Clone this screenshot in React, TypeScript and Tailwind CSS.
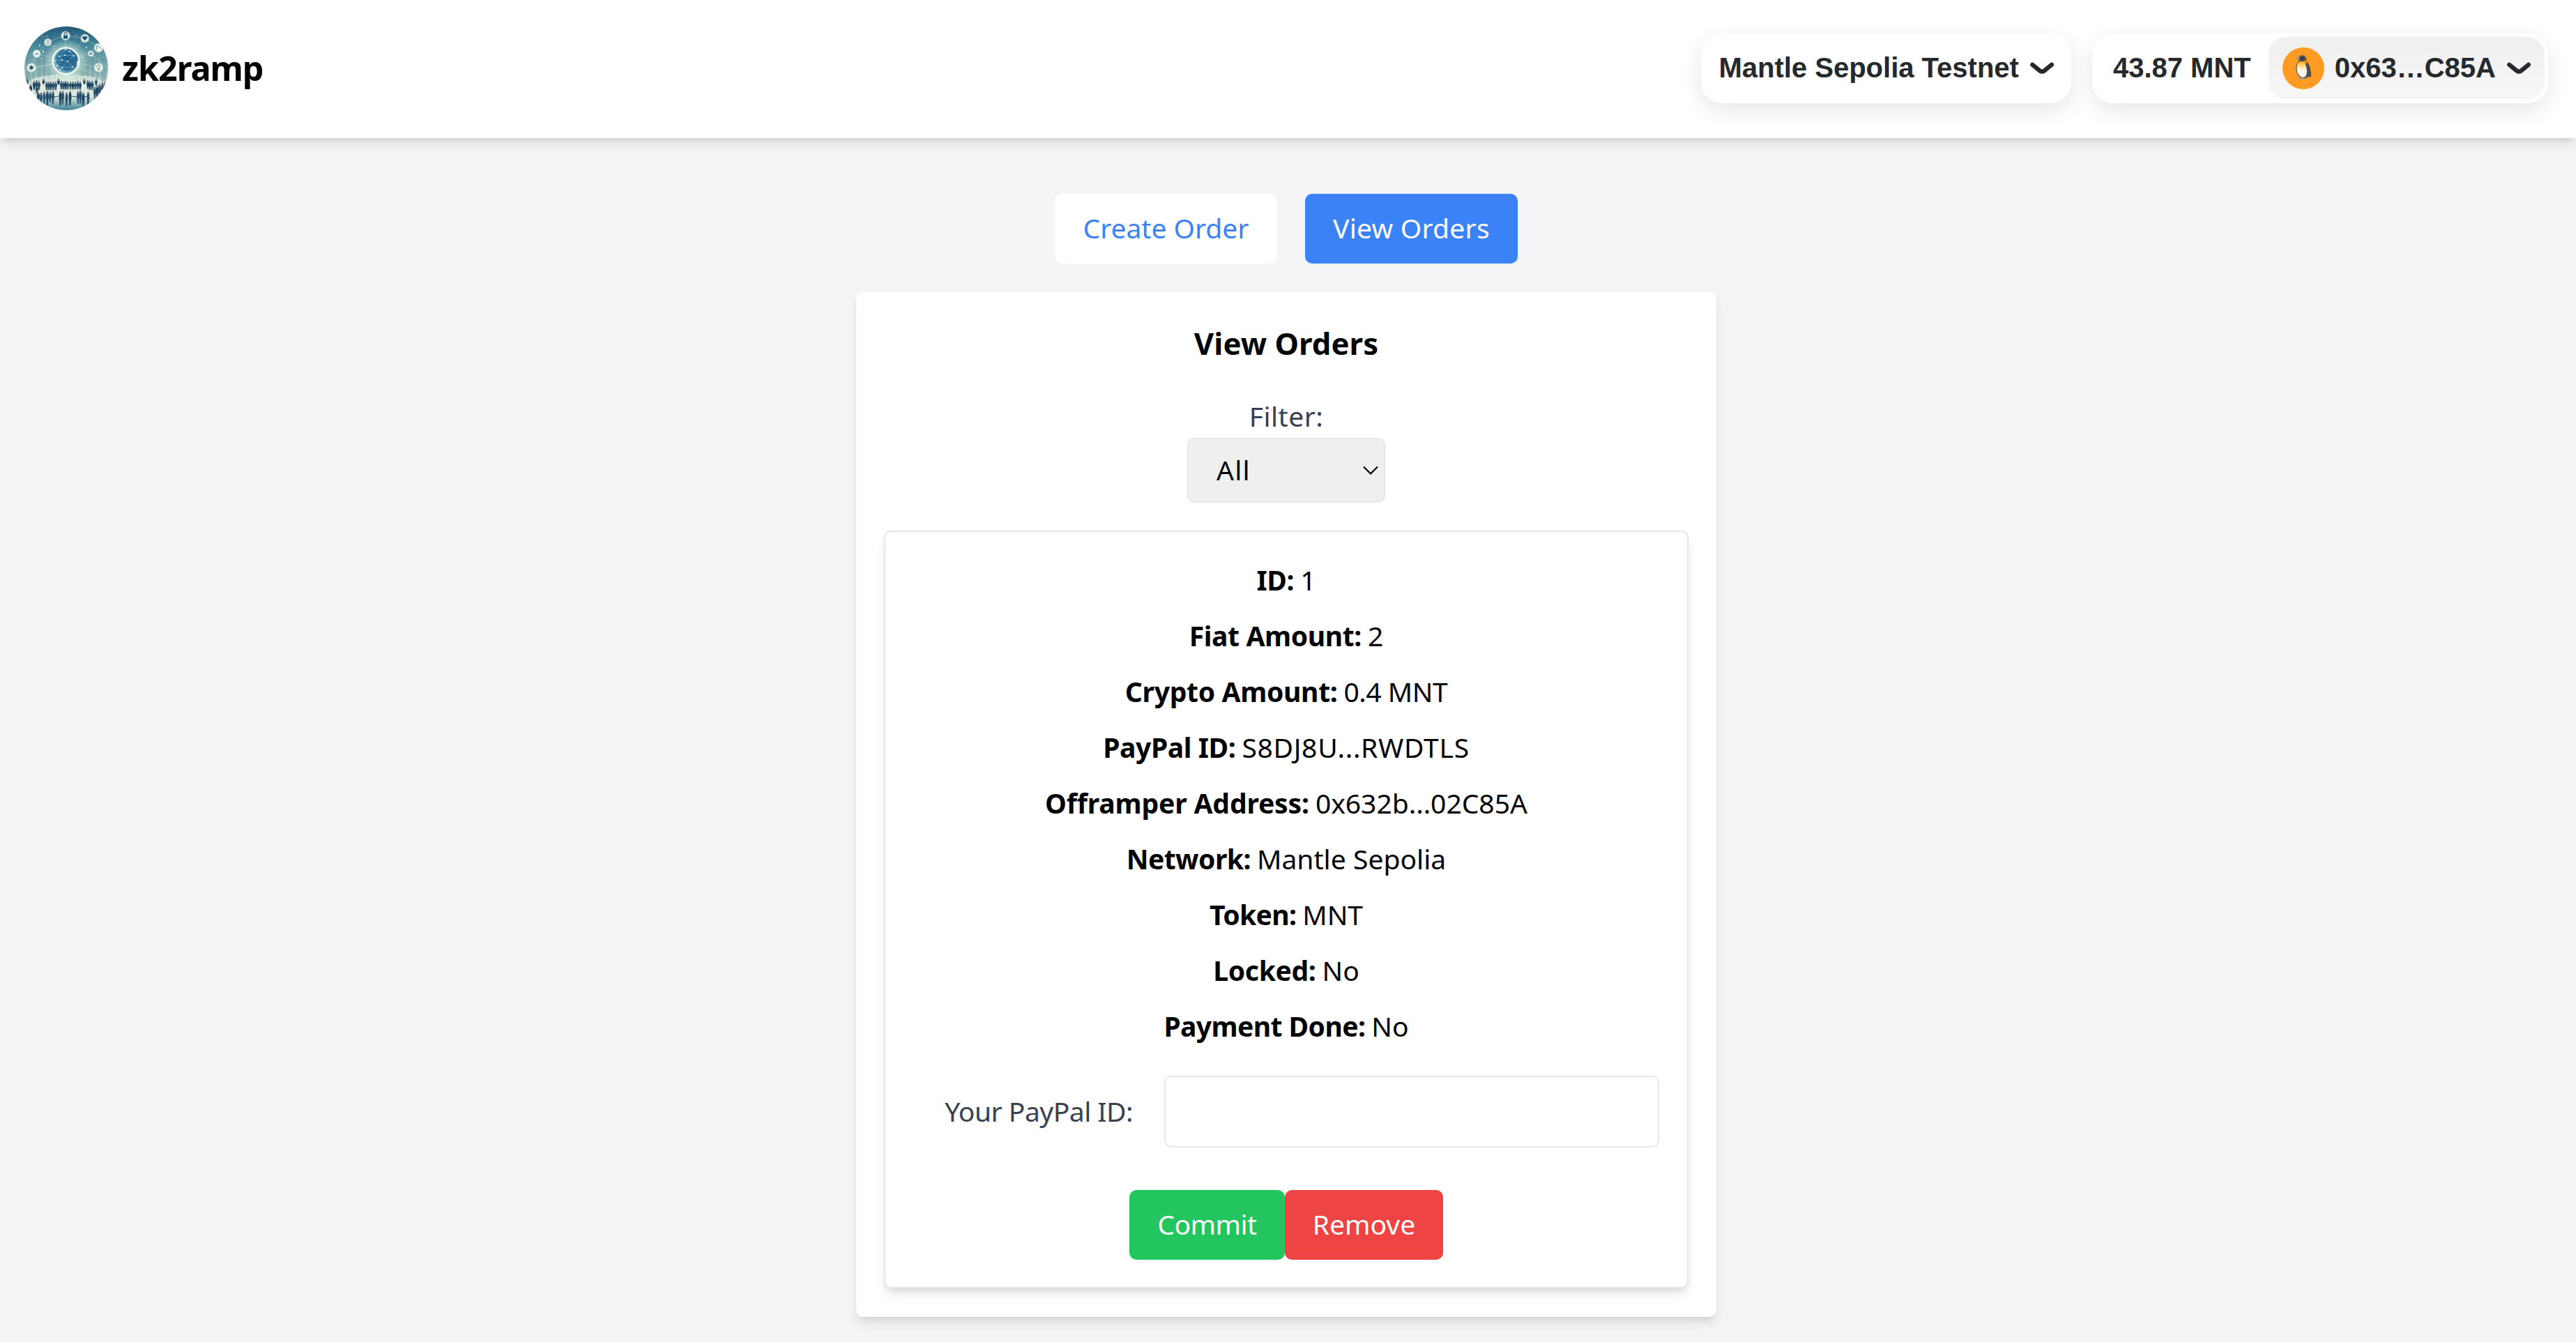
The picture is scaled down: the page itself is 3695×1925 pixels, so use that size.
import React from "react";

type Field = { label: string; labelClass: string; value: string; valueClass: string };

const fields: Field[] = [
  { label: "ID:", labelClass: "tracking-[-0.3px]", value: "1", valueClass: "" },
  { label: "Fiat Amount:", labelClass: "tracking-[-0.36px]", value: "2", valueClass: "" },
  { label: "Crypto Amount:", labelClass: "tracking-[-0.3px]", value: "0.4 MNT", valueClass: "tracking-[-0.45px]" },
  { label: "PayPal ID:", labelClass: "tracking-[-0.37px]", value: "S8DJ8U...RWDTLS", valueClass: "tracking-[0.72px]" },
  { label: "Offramper Address:", labelClass: "tracking-[-0.12px]", value: "0x632b...02C85A", valueClass: "" },
  { label: "Network:", labelClass: "tracking-[-0.5px]", value: "Mantle Sepolia", valueClass: "tracking-[0.05px]" },
  { label: "Token:", labelClass: "tracking-[-0.6px]", value: "MNT", valueClass: "" },
  { label: "Locked:", labelClass: "tracking-[-0.3px]", value: "No", valueClass: "" },
  { label: "Payment Done:", labelClass: "tracking-[-0.55px]", value: "No", valueClass: "" },
];

// Icon bubbles around the globe: x, y, radius
const bubbles: [number, number, number][] = [
  [59, 13.3, 5.4],
  [86.7, 17, 5],
  [106.5, 30.5, 5.4],
  [95.3, 39, 3.6],
  [106.5, 58.8, 5.4],
  [33.7, 22.7, 4.4],
  [17.7, 39, 4.6],
  [10, 59, 5.4],
];

// Crowd figures: x, head y, height
const people: [number, number, number][] = [
  [4, 76, 6], [14, 79, 12], [17.5, 78, 13], [21, 79, 12], [27.5, 76, 6],
  [32, 80, 11], [35, 80, 11], [38, 80, 11], [41.5, 80, 11], [45, 80, 11], [49, 76, 7],
  [53, 79, 11], [56, 80, 10], [59, 79, 11], [62, 80, 10], [66, 80, 10], [69.5, 80, 10], [73, 80, 10], [76.5, 79, 11], [80, 80, 10],
  [86, 76, 6], [91, 78, 11], [94, 79, 12], [97.5, 79, 12], [103, 76, 8],
  [9, 84, 12], [18, 86, 10], [116, 80, 8],
  [20, 95, 13], [24, 96, 16], [28.5, 95, 17], [33, 94, 20], [37, 95, 14], [41, 94, 18],
  [51.5, 94, 20], [55, 94, 18], [60.5, 96, 19], [65.5, 94, 20],
  [77, 94, 17], [80.5, 93, 19], [84.5, 96, 19], [91.5, 95, 18],
  [101, 88, 16], [104.5, 86, 18], [108, 84, 17], [112, 82, 15],
];

const towers: [number, number, number][] = [
  [2, 44, 7], [11, 50, 4], [18, 46, 6], [26, 38, 5], [33, 50, 6], [41, 58, 5],
  [73, 60, 5], [80, 46, 6], [88, 50, 5], [95, 44, 6], [103, 40, 4], [110, 46, 7],
];

const nodes: [number, number][] = [
  [50, 43], [58, 41], [54, 48], [62, 50], [71, 42], [43, 49], [47, 56], [54, 59], [69, 58], [65, 36], [59, 33], [51, 62],
];

function Logo() {
  return (
    <svg viewBox="0 0 120 120" className="size-[120px] rounded-full" aria-label="zk2ramp logo">
      <defs>
        <linearGradient id="sky" x1="0" y1="0" x2="0" y2="1">
          <stop offset="0" stopColor="#245a7c" />
          <stop offset="0.2" stopColor="#438297" />
          <stop offset="0.42" stopColor="#79a9ae" />
          <stop offset="0.62" stopColor="#a3c3c1" />
          <stop offset="0.72" stopColor="#e2ece0" />
          <stop offset="0.84" stopColor="#d8e6dd" />
          <stop offset="1" stopColor="#3f8093" />
        </linearGradient>
        <radialGradient id="halo">
          <stop offset="0.5" stopColor="#f2fae6" stopOpacity="0.95" />
          <stop offset="0.65" stopColor="#d3ebdc" stopOpacity="0.5" />
          <stop offset="1" stopColor="#d3ebdc" stopOpacity="0" />
        </radialGradient>
        <radialGradient id="globe" cx="0.55" cy="0.45">
          <stop offset="0" stopColor="#20608c" />
          <stop offset="0.75" stopColor="#2d7199" />
          <stop offset="1" stopColor="#7fb9c4" />
        </radialGradient>
        <radialGradient id="bubble">
          <stop offset="0.6" stopColor="#f7fbee" />
          <stop offset="0.8" stopColor="#e5f2e6" stopOpacity="0.75" />
          <stop offset="1" stopColor="#e5f2e6" stopOpacity="0" />
        </radialGradient>
      </defs>
      <rect width="120" height="120" fill="url(#sky)" />
      {towers.map(([x, y, w]) => (
        <rect key={x} x={x} y={y} width={w} height={78 - y} fill="#5d8c98" opacity="0.35" />
      ))}
      <ellipse cx="60" cy="78" rx="50" ry="9" fill="#f3f8e9" opacity="0.6" />
      <g stroke="#d7eee6" strokeWidth="0.6" opacity="0.65" fill="none">
        {bubbles.map(([x, y]) => (
          <path key={`${x}-${y}`} d={`M59.5 49.5L${x} ${y}`} />
        ))}
        <path d="M10 59L17.7 39L33.7 22.7Q46 16 59 13.3L86.7 17L106.5 30.5M95 39L120 60M59 49L0 64M59 49L118 78M18 4L34 23M106 30L120 20" />
      </g>
      <circle cx="59.5" cy="49.5" r="32" fill="url(#halo)" />
      <circle cx="59.5" cy="49.5" r="18.8" fill="url(#globe)" stroke="#f6fcec" strokeWidth="2.2" />
      <path d="M50 43L58 41L71 42L62 50L54 48L47 56L54 59L69 58L62 50M43 49L54 48L50 43L59 33L65 36L71 42M43 49L47 56M54 59L62 50" fill="none" stroke="#a9d5dc" strokeWidth="0.5" />
      {nodes.map(([x, y]) => (
        <circle key={`${x}-${y}`} cx={x} cy={y} r="1.1" fill="#effaf3" />
      ))}
      <ellipse cx="77" cy="53" rx="2" ry="4" fill="#f7fce9" opacity="0.8" />
      <g fill="#e6f4ec">
        <circle cx="27" cy="36" r="1.2" /><circle cx="25" cy="46" r="0.9" /><circle cx="33" cy="14" r="0.8" />
        <circle cx="83" cy="45" r="1.1" /><circle cx="46" cy="69" r="1.1" /><circle cx="75" cy="68" r="1.1" />
        <circle cx="43" cy="28" r="0.8" /><circle cx="74" cy="13" r="0.8" /><circle cx="22" cy="27" r="1" />
        <circle cx="89" cy="30" r="1" /><circle cx="41" cy="70" r="1" />
      </g>
      {bubbles.map(([x, y, r]) => (
        <circle key={`${x}-${y}`} cx={x} cy={y} r={r * 1.35} fill="url(#bubble)" />
      ))}
      <g fill="#1f567d">
        <rect x="56" y="12.6" width="6.2" height="5" rx="0.6" />
        <path d="M57.2 12.6V11a1.9 2.2 0 0 1 3.8 0V12.6" fill="none" stroke="#1f567d" strokeWidth="1.1" />
        <path d="M86.7 20.4L83.5 17a1.9 1.9 0 0 1 3.2-2.4a1.9 1.9 0 0 1 3.2 2.4Z" />
        <path d="M10 55.4V62.6M6.9 57.2L13.1 60.8M6.9 60.8L13.1 57.2" stroke="#1f567d" strokeWidth="1.5" />
        <circle cx="10" cy="59" r="1.9" />
      </g>
      <g fill="none" stroke="#39728c" strokeWidth="0.9">
        <path d="M106.5 55.2a2.4 2.4 0 0 1 1.3 4.4V61h-2.6v-1.4a2.4 2.4 0 0 1 1.3-4.4M105.5 62.6h2" />
        <path d="M103.6 33.5V28h3M107 28.5l2.5 3.5" />
        <ellipse cx="33.7" cy="22.7" rx="1.8" ry="2.5" />
        <path d="M15.6 41V38.8M17.7 41V36.8M19.8 41V38M93.5 40.2h3.6v-2h-3.6zM94.3 38l1-1.2l1 1.2" />
      </g>
      {people.map(([x, y, h], i) => (
        <g key={i} fill={i % 3 === 1 ? "#173f5f" : "#28506c"}>
          <circle cx={x} cy={y} r={h > 13 ? 1.3 : 1.1} fill="#4a5961" />
          <path d={`M${x - 1.7} ${y + 1.5}h3.4l0.3 ${h * 0.45}h-0.7l-0.2 ${h * 0.45}h-0.8l-0.2 -${h * 0.35}l-0.4 ${h * 0.35}h-0.9l-0.3 -${h * 0.45}h-0.5z`} />
        </g>
      ))}
      <path d="M42 101L49 100M67 100L75 101M34 103L30 101M85 101L91 100" stroke="#28506c" strokeWidth="1" />
    </svg>
  );
}

function Penguin() {
  return (
    <svg viewBox="0 0 60 60" className="size-[60px] shrink-0">
      <defs>
        <linearGradient id="belly" x1="0" y1="0" x2="0" y2="1">
          <stop offset="0" stopColor="#ffb21a" />
          <stop offset="0.2" stopColor="#ffcf6b" />
          <stop offset="0.5" stopColor="#fff6e3" />
          <stop offset="1" stopColor="#ffffff" />
        </linearGradient>
      </defs>
      <circle cx="30" cy="30" r="30" fill="#ff9a23" />
      <path d="M23 44.2q2-1.6 5-0.6l1.5 1.2q-3.4 1.6-6.5 0.6zM30 43.6q4-1 6 0.4q-2 1.6-5 1.2z" fill="#8b95a1" />
      <path d="M23.5 14.5Q25 11 29 11.3Q34.2 12 34.3 17.5Q34.6 20.5 37 23Q41.2 29 41 42L39.6 42.8L38 41.8Q35 44.4 29.5 43.8Q20.5 42.5 19.3 31Q19 25 22.6 20.4Q23.4 18 23.5 14.5Z" fill="#4d4f52" />
      <path d="M23.6 20.3H31.4Q34.6 27 35 34Q35 43 29 43Q21.5 41 20.6 31.5Q20 25 23.6 20.3Z" fill="url(#belly)" />
      <path d="M32.2 18.5Q34.8 18.4 35 21Q34.8 23.4 32.6 23.6Q31.2 21 32.2 18.5Z" fill="#ff9800" />
      <path d="M24 13.8Q21.5 13.8 18.7 15.5Q21 17 24.4 17Z" fill="#8f959b" />
      <circle cx="28.6" cy="15.8" r="1.4" fill="#17181a" />
    </svg>
  );
}

function Chevron() {
  return (
    <svg viewBox="0 0 14 7" className="h-[17.5px] w-[35px] shrink-0" fill="none">
      <path
        d="M12.75 1.54001L8.51647 5.0038C7.77974 5.60658 6.72026 5.60658 5.98352 5.0038L1.75 1.54001"
        stroke="#25292E"
        strokeWidth="2.5"
        strokeLinecap="round"
        strokeLinejoin="round"
      />
    </svg>
  );
}

function WalletBar() {
  return (
    <div className="flex gap-[30px] font-['Liberation_Sans',sans-serif] text-[40px] leading-[50px] font-bold whitespace-nowrap text-[#25292E]">
      <button className="flex h-[100px] items-center gap-[15px] rounded-[30px] bg-white px-[25px] shadow-[0_10px_30px_rgba(0,0,0,0.1)]">
        <span className="pb-0.5">Mantle Sepolia Testnet</span>
        <Chevron />
      </button>
      <button className="flex h-[100px] items-center rounded-[30px] bg-white pr-[5px] shadow-[0_10px_30px_rgba(0,0,0,0.1)]">
        <span className="pr-[25px] pb-0.5 pl-[30px]">43.87 MNT</span>
        <span className="flex h-[90px] items-center gap-[15px] rounded-[25px] bg-linear-to-b from-[#efefef] to-[#f7f7f7] px-5">
          <Penguin />
          <span className="pb-0.5">0x63…C85A</span>
          <Chevron />
        </span>
      </button>
    </div>
  );
}

function OrderCard() {
  return (
    <div className="h-[1087px] rounded-[10px] border-2 border-[#e5e7eb] bg-white px-10 pt-[39px] pb-10 shadow-[0_10px_15px_-2.5px_rgba(0,0,0,0.1),0_5px_10px_-5px_rgba(0,0,0,0.1)]">
      {fields.map((f) => (
        <p key={f.label} className="mb-5 flex justify-center gap-[9px] whitespace-nowrap">
          <strong className={f.labelClass}>{f.label}</strong>
          <span className={f.valueClass}>{f.value}</span>
        </p>
      ))}
      <div className="mt-[41px] flex items-center justify-end">
        <label className="mr-[45px] pb-0.5 tracking-[-0.5px] text-[#374151]">Your PayPal ID:</label>
        <input type="text" className="h-[103px] w-[710px] rounded-[10px] border-2 border-[#e5e7eb] bg-white px-5" />
      </div>
      <div className="mt-[61px] flex justify-center text-white">
        <button className="h-[100px] w-[223px] rounded-[10px] bg-[#22c55e] pb-0.5 tracking-[-0.5px]">Commit</button>
        <button className="h-[100px] w-[227px] rounded-[10px] bg-[#ef4444] pb-0.5">Remove</button>
      </div>
    </div>
  );
}

export default function App() {
  return (
    <div className="h-[1925px] overflow-hidden bg-[#f3f4f6] font-['Noto_Sans',sans-serif] text-[39px] leading-[60px] text-black">
      <header className="flex h-[198px] items-center justify-between bg-white pr-10 pb-0.5 pl-[35px] shadow-[0_10px_15px_-2.5px_rgba(0,0,0,0.1),0_5px_10px_-5px_rgba(0,0,0,0.1)]">
        <div className="flex items-center gap-5">
          <Logo />
          <h1 className="pb-0.5 text-[48.5px] leading-[70px] font-bold tracking-[-1px]">zk2ramp</h1>
        </div>
        <WalletBar />
      </header>
      <main className="flex flex-col items-center pt-20 pr-[5px]">
        <nav className="flex gap-10">
          <button className="h-[100px] w-[319px] rounded-[10px] bg-white pb-0.5 text-[#3b82f6]">Create Order</button>
          <button className="h-[100px] w-[305px] rounded-[10px] bg-[#3b82f6] pb-0.5 tracking-[0.25px] text-white">View Orders</button>
        </nav>
        <section className="mt-10 flex h-[1471px] w-[1234px] flex-col rounded-[10px] bg-white px-10 pt-[39px] pb-10 shadow-[0_10px_15px_-2.5px_rgba(0,0,0,0.1),0_5px_10px_-5px_rgba(0,0,0,0.1)]">
          <h2 className="mb-10 text-center text-[43.6px] leading-[70px] font-bold tracking-[0.1px]">View Orders</h2>
          <div className="mb-10 flex flex-col items-center">
            <label className="mb-px tracking-[0.5px] text-[#374151]">Filter:</label>
            <button className="flex h-[93px] w-[284px] items-center justify-between rounded-[10px] border-2 border-[#e5e7eb] bg-[#efefef] pr-[7px] pl-10">
              <span className="pb-0.5 tracking-[1.3px]">All</span>
              <svg viewBox="0 0 24 14" className="h-[14px] w-6" fill="none">
                <path d="M2 1.5L12 11.5L22 1.5" stroke="#000" strokeWidth="2.2" />
              </svg>
            </button>
          </div>
          <OrderCard />
        </section>
      </main>
    </div>
  );
}
